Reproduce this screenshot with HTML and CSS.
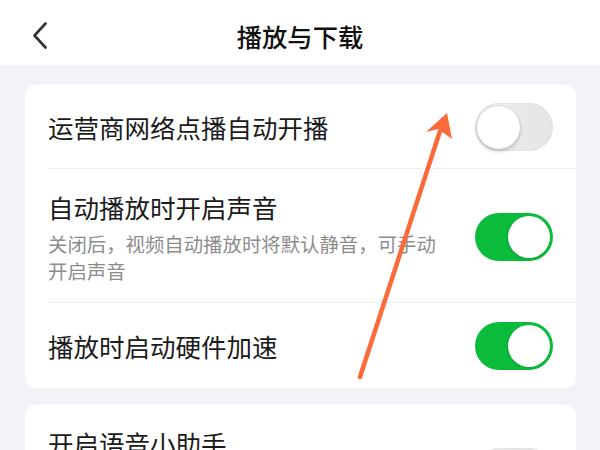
FILE: index.html
```html
<!DOCTYPE html>
<html lang="zh-CN">
<head>
<meta charset="utf-8">
<title>播放与下载</title>
<link rel="stylesheet" href="styles.css">
</head>
<body>
<div class="page">
  <header class="topbar">
    <span class="back" aria-label="返回">
      <svg width="16" height="28" viewBox="0 0 16 28"><polyline points="13.5,1.5 2.5,13.5 13.5,25.5" fill="none" stroke="#333" stroke-width="2.6" stroke-linecap="round" stroke-linejoin="round"/></svg>
    </span>
    <h1 class="title">播放与下载</h1>
  </header>
  <main class="content">
    <section class="card">
      <div class="row row-single">
        <div class="row-text"><div class="row-title">运营商网络点播自动开播</div></div>
        <span class="switch"><span class="knob"></span></span>
      </div>
      <div class="row row-double">
        <div class="row-text">
          <div class="row-title">自动播放时开启声音</div>
          <div class="row-desc">关闭后，视频自动播放时将默认静音，可手动开启声音</div>
        </div>
        <span class="switch on"><span class="knob"></span></span>
      </div>
      <div class="row row-single last">
        <div class="row-text"><div class="row-title">播放时启动硬件加速</div></div>
        <span class="switch on"><span class="knob"></span></span>
      </div>
    </section>
    <section class="card">
      <div class="row row-tall last">
        <div class="row-text top"><div class="row-title">开启语音小助手</div></div>
        <span class="switch"><span class="knob"></span></span>
      </div>
    </section>
  </main>
  <svg class="annot" width="600" height="450" viewBox="0 0 600 450">
    <line x1="360" y1="377" x2="441" y2="128" stroke="#fb6a3a" stroke-width="4.5" stroke-linecap="round"/>
    <polygon points="447,113 426,132 438,129 452,139" fill="#fb6a3a"/>
  </svg>
</div>
</body>
</html>
```
FILE: styles.css
```css
html, body {
  margin: 0;
  padding: 0;
}
body {
  background: #f1f3f8;
  font-family: "Noto Sans CJK SC", "Noto Sans", sans-serif;
  color: #1b1b1b;
  width: 600px;
  height: 450px;
  overflow: hidden;
}
.page {
  position: relative;
  width: 600px;
  height: 450px;
  overflow: hidden;
}
.topbar {
  height: 65px;
  background: #ffffff;
  display: flex;
  align-items: center;
  justify-content: center;
  position: relative;
}
.back {
  position: absolute;
  left: 32px;
  top: 22px;
  width: 16px;
  height: 28px;
  display: block;
}
.back svg { display: block; }
.title {
  margin: 0;
  font-size: 25.3px;
  font-weight: 500;
  line-height: 34px;
  color: #111;
  margin-top: 6px;
}
.content {
  padding: 20px 24px 0 25px;
  display: flex;
  flex-direction: column;
  gap: 17px;
}
.card {
  background: #ffffff;
  border-radius: 10px;
  padding-left: 23px;
}
.row {
  display: flex;
  align-items: center;
  justify-content: space-between;
  padding-right: 23px;
  border-bottom: 1px solid #eeeeee;
  box-sizing: border-box;
}
.row.last { border-bottom: none; }
.row-single { min-height: 84px; }
.row-single.last { min-height: 85px; }
.row-double {
  min-height: 134px;
  padding-top: 21px;
  padding-bottom: 18px;
}
.row-tall {
  min-height: 134px;
  align-items: center;
}
.row-text.top {
  align-self: flex-start;
  padding-top: 21px;
}
.row-title {
  font-size: 25.5px;
  line-height: 34px;
  color: #1b1b1b;
}
.row-desc {
  margin-top: 6px;
  font-size: 19.4px;
  line-height: 27px;
  color: #8c8c8c;
  max-width: 400px;
}
.switch {
  position: relative;
  flex: none;
  width: 78px;
  height: 48px;
  border-radius: 24px;
  background: linear-gradient(90deg, #f0f0f0, #e4e4e4);
  box-shadow: inset 0 0 0 1px #e2e2e2;
}
.switch .knob {
  position: absolute;
  top: 3px;
  left: 2px;
  width: 43px;
  height: 43px;
  border-radius: 50%;
  background: #ffffff;
  box-shadow: 0 2px 4px rgba(0, 0, 0, 0.22), 0 0 0 0.5px rgba(0, 0, 0, 0.08);
}
.switch.on {
  background: #0bbb3b;
  box-shadow: none;
}
.switch.on .knob {
  left: auto;
  right: 3px;
  width: 42px;
  height: 42px;
  box-shadow: -1px 1px 2px rgba(0, 0, 0, 0.12);
}
.annot {
  position: absolute;
  left: 0;
  top: 0;
  pointer-events: none;
}
```
